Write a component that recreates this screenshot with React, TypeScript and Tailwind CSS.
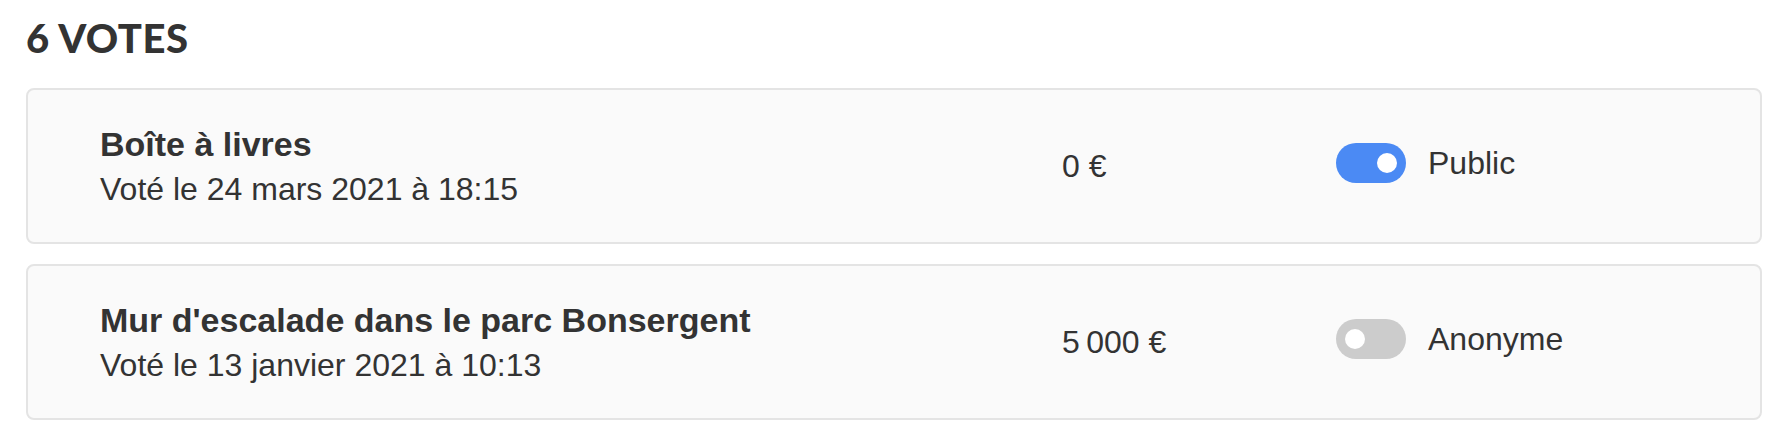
import React from 'react';

type Vote = {
  title: string;
  date: string;
  amount: string;
  isPublic: boolean;
};

const votes: Vote[] = [
  { title: 'Boîte à livres', date: 'Voté le 24 mars 2021 à 18:15', amount: '0 €', isPublic: true },
  {
    title: "Mur d'escalade dans le parc Bonsergent",
    date: 'Voté le 13 janvier 2021 à 10:13',
    amount: '5\u202f000 €',
    isPublic: false,
  },
];

function Toggle({ on }: { on: boolean }) {
  return (
    <span
      className={`flex h-[40px] w-[70px] shrink-0 items-center rounded-full px-[9px] ${
        on ? 'justify-end bg-[#4b8af4]' : 'justify-start bg-[#cccccc]'
      }`}
    >
      <span className="h-[20px] w-[20px] rounded-full bg-white" />
    </span>
  );
}

function VoteCard({ vote }: { vote: Vote }) {
  return (
    <div className="flex h-[156px] items-center rounded-[8px] border-2 border-[#e4e4e4] bg-[#fafafa] pl-[72px]">
      <div className="flex w-[962px] flex-col">
        <span className="text-[34px] font-bold leading-[40px]">{vote.title}</span>
        <span className="mt-[5px] text-[32px] leading-[40px]">{vote.date}</span>
      </div>
      <div className="w-[274px] text-[32px] leading-[40px]">{vote.amount}</div>
      <div className="mb-[7px] flex items-center gap-[22px]">
        <Toggle on={vote.isPublic} />
        <span className="text-[32px] leading-[40px]">{vote.isPublic ? 'Public' : 'Anonyme'}</span>
      </div>
    </div>
  );
}

export default function App() {
  return (
    <div
      className="h-[436px] w-[1778px] bg-white pl-[26px] pr-[16px] pt-[18px] text-[#333333]"
      style={{ fontFamily: '"Liberation Sans", Arial, Helvetica, sans-serif' }}
    >
      <h1
        className="text-[40px] font-black uppercase leading-[40px] tracking-[0.5px]"
        style={{ fontFamily: 'Lato, "Liberation Sans", sans-serif' }}
      >
        6 votes
      </h1>
      <div className="mt-[30px] flex flex-col gap-[20px]">
        {votes.map((v) => (
          <VoteCard key={v.title} vote={v} />
        ))}
      </div>
    </div>
  );
}
